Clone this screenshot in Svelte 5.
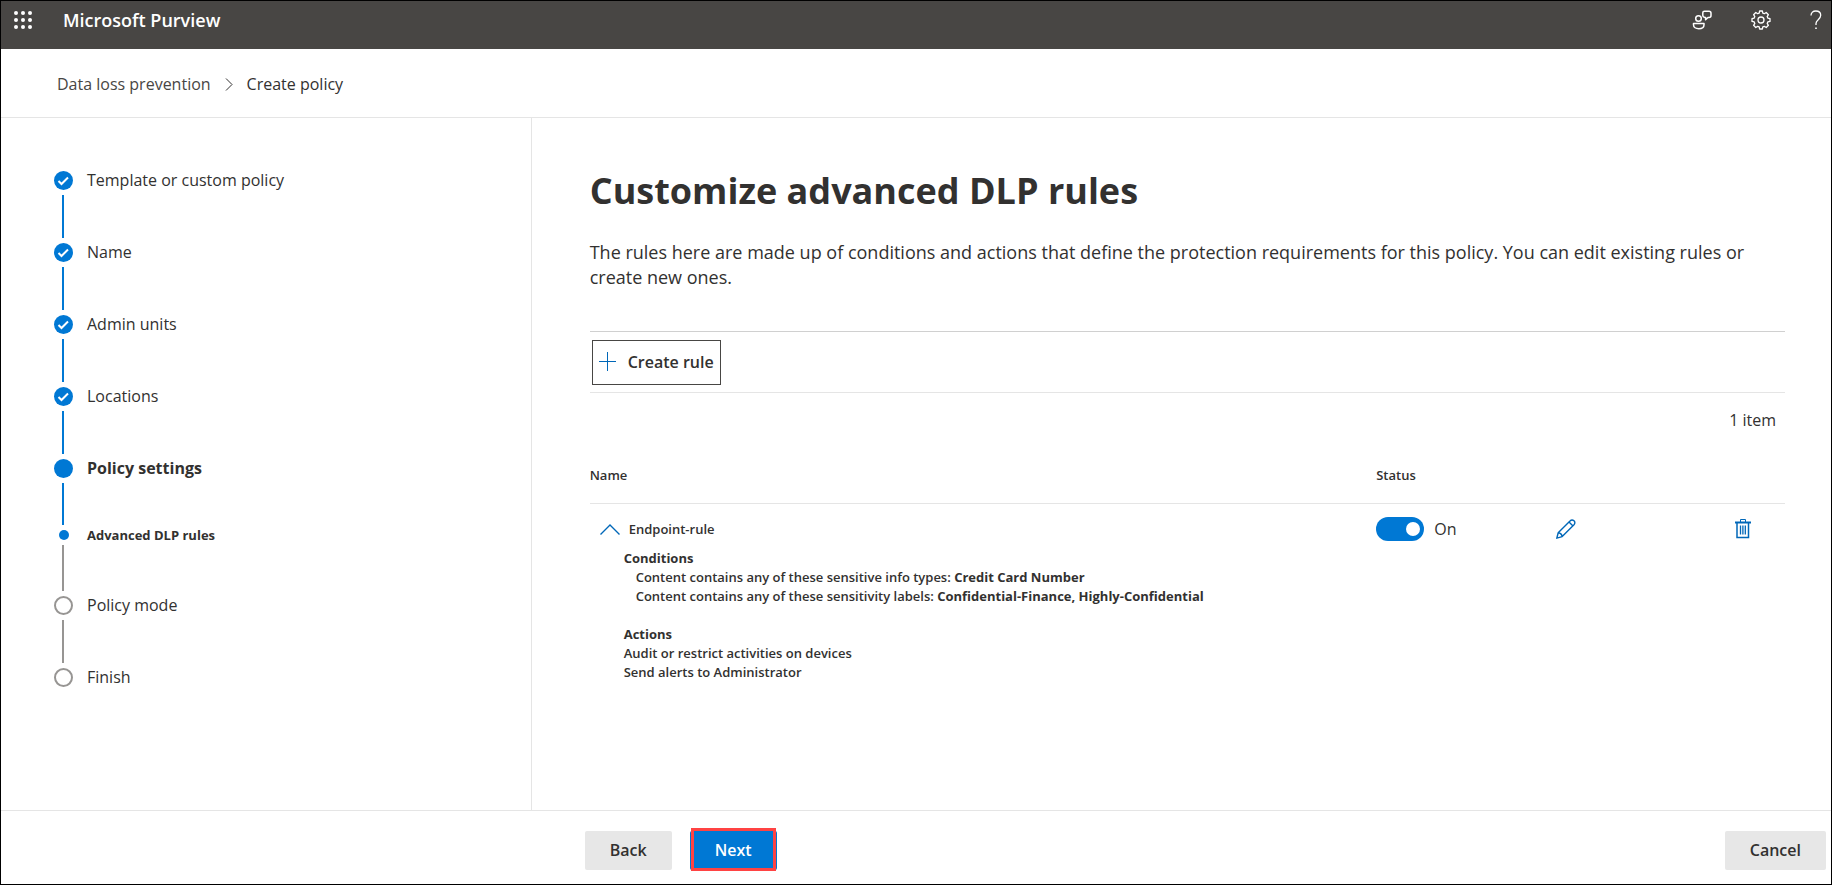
<script>
  const steps = [
    { label: 'Template or custom policy', state: 'done' },
    { label: 'Name', state: 'done' },
    { label: 'Admin units', state: 'done' },
    { label: 'Locations', state: 'done' },
    { label: 'Policy settings', state: 'current' },
    { label: 'Advanced DLP rules', state: 'sub' },
    { label: 'Policy mode', state: 'todo' },
    { label: 'Finish', state: 'todo' }
  ];
  const dots = [2, 9, 16];
  let enabled = $state(true);
  let expanded = $state(true);
</script>

<div class="page">
  <header class="topbar">
    <button class="icon-btn" aria-label="App launcher">
      <svg width="18" height="18" viewBox="0 0 18 18" fill="#fff">
        {#each dots as y}
          {#each dots as x}
            <circle cx={x} cy={y} r="2" />
          {/each}
        {/each}
      </svg>
    </button>
    <span class="brand">Microsoft Purview</span>
    <div class="tools">
      <button class="icon-btn" aria-label="Feedback">
        <svg width="20" height="20" viewBox="0 0 20 20" fill="none" stroke="#fff" stroke-width="1.5">
          <circle cx="6.5" cy="8.5" r="2.8" />
          <path d="M1.5 13.5h10.5v1.2c0 2.8-2.2 4-5.2 4s-5.3-1.2-5.3-4z" stroke-linejoin="round" />
          <path d="M10.800 4.200V2.800c0-1 .6-1.600 1.600-1.600h4.600c1.200 0 2 .8 2 2v2.300c0 1.200-.8 2-2 2h-1l-2.400 2.200V7.500h-.8c-1.200-.2-2-.8-2-2z" stroke-linejoin="round" />
        </svg>
      </button>
      <button class="icon-btn" aria-label="Settings">
        <svg width="20" height="20" viewBox="0 0 20 20" fill="none" stroke="#fff" stroke-width="1.3" stroke-linejoin="round">
          <path d="M8.600 1h2.800l.4 2.100 1.500.6 1.900-1.200 2.200 2.200-1.200 1.900.6 1.500 2.200.5v2.800l-2.200.5-.6 1.500 1.200 1.900-2.200 2.200-1.900-1.200-1.500.6-.4 2.100H8.600l-.4-2.100-1.500-.6-1.900 1.200-2.200-2.200 1.200-1.900-.6-1.500L1 11.400V8.600l2.200-.5.6-1.500-1.200-1.900 2.200-2.200 1.900 1.200 1.500-.6z" />
          <circle cx="10" cy="10" r="3" />
        </svg>
      </button>
      <button class="icon-btn" aria-label="Help">
        <svg width="12" height="20" viewBox="0 0 12 20" fill="none" stroke="#fff" stroke-width="1.3">
          <path d="M1 5.500C1 2.500 3 1 5.800 1s4.900 1.700 4.900 4.300c0 2.200-1.200 3.300-2.700 4.600C6.600 11.100 6 12 6 13.500V15" />
          <path d="M5.200 18.200h1.600" stroke-width="1.600" />
        </svg>
      </button>
    </div>
  </header>

  <nav class="crumbs" aria-label="Breadcrumb">
    <a href="#dlp">Data loss prevention</a>
    <svg width="8" height="13" viewBox="0 0 8 13" fill="none" stroke="#323130"><path d="M1 .5l6 6-6 6" /></svg>
    <span>Create policy</span>
  </nav>

  <div class="body">
    <aside>
      <ol class="steps">
        {#each steps as step}
          <li class={step.state}>
            <div class="rail">
              <span class="marker">
                {#if step.state === 'done'}
                  <svg width="19" height="19" viewBox="0 0 19 19" fill="none" stroke="#fff" stroke-width="2"><path d="M4.500 10l3 3L14 6.500" /></svg>
                {/if}
              </span>
              <span class="line"></span>
            </div>
            <span class="label">{step.label}</span>
          </li>
        {/each}
      </ol>
    </aside>

    <main>
      <h1>Customize advanced DLP rules</h1>
      <p class="intro">The rules here are made up of conditions and actions that define the protection requirements for this policy. You can edit existing rules or create new ones.</p>

      <div class="toolbar">
        <button class="create">
          <svg width="18" height="19" viewBox="0 0 18 19" stroke="#0067b8" fill="none"><path d="M8.500 0v19M0 9.500h17" /></svg>
          Create rule
        </button>
      </div>
      <div class="count">1 item</div>

      <table>
        <colgroup><col class="c-name" /><col class="c-mid" /><col class="c-mid" /><col /></colgroup>
        <thead>
          <tr><th scope="col">Name</th><th scope="col">Status</th><td></td><td></td></tr>
        </thead>
        <tbody>
          <tr>
            <td>
              <button class="expander" aria-expanded={expanded} onclick={() => (expanded = !expanded)}>
                <svg class:closed={!expanded} width="20" height="11" viewBox="0 0 20 11" fill="none" stroke="#0067b8" stroke-width="1.400"><path d="M.5 10.500L10 1l9.500 9.500" /></svg>
                Endpoint-rule
              </button>
              {#if expanded}
                <div class="details">
                  <h2>Conditions</h2>
                  <p class="indent">Content contains any of these sensitive info types: <b>Credit Card Number</b></p>
                  <p class="indent">Content contains any of these sensitivity labels: <b>Confidential-Finance, Highly-Confidential</b></p>
                  <h2 class="second">Actions</h2>
                  <p>Audit or restrict activities on devices</p>
                  <p>Send alerts to Administrator</p>
                </div>
              {/if}
            </td>
            <td>
              <label class="switch">
                <input type="checkbox" role="switch" bind:checked={enabled} />
                <span>{enabled ? 'On' : 'Off'}</span>
              </label>
            </td>
            <td>
              <button class="icon-btn row-btn" aria-label="Edit rule">
                <svg width="20" height="20" viewBox="0 0 20 20" fill="none" stroke="#0067b8" stroke-width="1.400" stroke-linejoin="round">
                  <path d="M.8 19.200l1.400-5.400L14 2c1.200-1.300 2.800-1.300 4-.2s1.100 2.800 0 4L6.200 17.600zM2.200 13.800c2 .2 3.600 1.600 4 3.800M13 3l4 4" />
                </svg>
              </button>
            </td>
            <td>
              <button class="icon-btn row-btn" aria-label="Delete rule">
                <svg width="16" height="20" viewBox="0 0 16 20" fill="none" stroke="#0067b8">
                  <path d="M0 3.500h16" stroke-width="2" />
                  <path d="M5.500 3V.5h5V3" />
                  <path d="M2 4v14.500h11.500V4" stroke-width="1.500" />
                  <path d="M5.500 6.500v9M7.900 6.500v9M10.300 6.500v9" stroke-width="1.300" />
                </svg>
              </button>
            </td>
          </tr>
        </tbody>
      </table>
    </main>
  </div>

  <footer>
    <button class="btn">Back</button>
    <button class="btn primary">Next</button>
    <button class="btn cancel">Cancel</button>
  </footer>
</div>

<style>
  :global(body) {
    margin: 0;
  }
  .page {
    --blue: #0078d4;
    --rule: #e5e5e5;
    box-sizing: border-box;
    min-height: 100vh;
    display: flex;
    flex-direction: column;
    border: 1px solid #000;
    background: #fff;
    color: #323130;
    font-family: 'Segoe UI', 'Open Sans', sans-serif;
    font-size: 16px;
    line-height: 24px;
  }
  button {
    font: inherit;
    color: inherit;
    cursor: pointer;
  }
  svg {
    display: block;
    flex: none;
  }
  h1, h2, p, ol {
    margin: 0;
    padding: 0;
  }
  b {
    font-weight: 700;
  }
  .icon-btn {
    border: 0;
    padding: 0;
    background: none;
  }
  .topbar {
    display: flex;
    align-items: center;
    height: 38px;
    padding: 0 9px 10px 13px;
    background: #484644;
    color: #fff;
  }
  .brand {
    margin-left: 31px;
    font-size: 18px;
    font-weight: 600;
  }
  .tools {
    display: flex;
    gap: 39px;
    margin-left: auto;
  }
  .crumbs {
    display: flex;
    align-items: center;
    gap: 14px;
    height: 66px;
    padding: 2px 0 0 56px;
    border-bottom: 1px solid var(--rule);
  }
  .crumbs a {
    color: #484644;
    text-decoration: none;
  }
  .body {
    flex: 1;
    display: flex;
  }
  aside {
    box-sizing: border-box;
    width: 29%;
    padding: 53px 24px 24px 53px;
    border-right: 1px solid var(--rule);
  }
  .steps {
    list-style: none;
  }
  li {
    display: flex;
    gap: 14px;
  }
  .rail {
    display: flex;
    flex-direction: column;
    align-items: center;
    gap: 5px;
    width: 19px;
    padding-bottom: 5px;
  }
  .marker {
    box-sizing: border-box;
    width: 19px;
    height: 19px;
    border-radius: 50%;
    background: var(--blue);
  }
  .line {
    align-self: flex-start;
    width: 2px;
    height: 43px;
    margin-left: 8px;
    background: var(--blue);
  }
  .label {
    line-height: 19px;
  }
  .current .label {
    font-weight: 700;
  }
  .current .line {
    height: 42px;
  }
  .sub .marker {
    width: 10px;
    height: 10px;
  }
  .sub .line {
    height: 46px;
  }
  .sub .label {
    font-size: 13px;
    font-weight: 700;
    line-height: 10px;
  }
  .todo .marker {
    border: 2px solid #979593;
    background: #fff;
  }
  .todo .line,
  .sub .line {
    background: #979593;
  }
  li:last-child .line {
    display: none;
  }
  main {
    flex: 1;
    min-width: 0;
    padding: 48px 46px 24px 58px;
  }
  h1 {
    font-size: 36px;
    line-height: 50px;
    font-weight: 700;
  }
  .intro {
    margin-top: 24px;
    font-size: 18px;
    line-height: 25px;
  }
  .toolbar {
    margin-top: 41px;
    padding: 8px 2px 7px;
    border-top: 1px solid #d0d0d0;
    border-bottom: 1px solid var(--rule);
  }
  .create {
    display: flex;
    align-items: center;
    gap: 11px;
    height: 45px;
    padding: 0 6px 2px 6px;
    border: 1px solid #484644;
    background: #fff;
    font-weight: 600;
  }
  .count {
    padding: 15px 9px 16px;
    text-align: right;
  }
  table {
    width: 100%;
    table-layout: fixed;
    border-collapse: collapse;
    font-size: 13px;
    font-weight: 600;
    line-height: 19px;
  }
  .c-name {
    width: 65.8%;
  }
  .c-mid {
    width: 15%;
  }
  th {
    height: 55px;
    padding: 0;
    text-align: left;
    font-weight: 600;
  }
  thead tr {
    border-bottom: 1px solid var(--rule);
  }
  td {
    padding: 0;
    vertical-align: top;
  }
  tbody td {
    padding-top: 13px;
  }
  .expander {
    display: flex;
    align-items: center;
    gap: 9px;
    height: 24px;
    padding: 0 0 0 10px;
    border: 0;
    background: none;
  }
  .closed {
    transform: rotate(180deg);
  }
  .details {
    padding: 8px 0 0 34px;
  }
  h2 {
    font-size: 13px;
    font-weight: 700;
  }
  .second {
    margin-top: 19px;
  }
  .indent {
    padding-left: 12px;
  }
  .switch {
    display: flex;
    align-items: center;
    gap: 10px;
    font-size: 16px;
    font-weight: 400;
    line-height: 24px;
  }
  .switch input {
    appearance: none;
    box-sizing: border-box;
    width: 48px;
    height: 24px;
    margin: 0;
    padding: 5px 4px;
    border-radius: 12px;
    background: #8a8886;
  }
  .switch input::before {
    content: '';
    display: block;
    width: 14px;
    height: 14px;
    border-radius: 50%;
    background: #fff;
  }
  .switch input:checked {
    background: var(--blue);
  }
  .switch input:checked::before {
    margin-left: auto;
  }
  .row-btn {
    margin-top: 2px;
  }
  footer {
    display: flex;
    gap: 18px;
    padding: 20px 5px 14px calc(29% + 53px);
    border-top: 1px solid var(--rule);
  }
  .btn {
    min-width: 86px;
    height: 39px;
    padding: 0 25px 2px;
    border: 0;
    border-radius: 2px;
    background: #e7e7e7;
    font-weight: 600;
  }
  .primary {
    position: relative;
    background: var(--blue);
    color: #fff;
  }
  .primary::after {
    content: '';
    position: absolute;
    inset: -3px 1px -1px;
    border: 3px solid #ff4343;
  }
  .cancel {
    margin-left: auto;
  }
</style>
